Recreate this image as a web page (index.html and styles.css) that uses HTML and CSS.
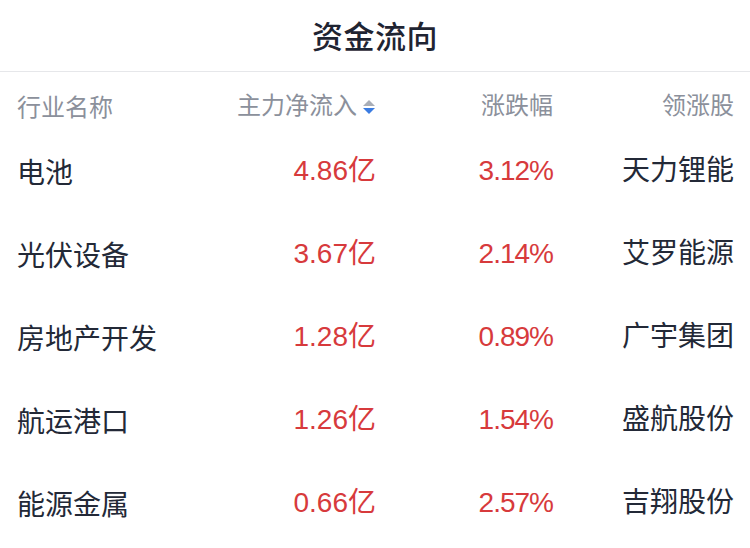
FILE: index.html
```html
<!DOCTYPE html>
<html lang="zh-CN">
<head>
<meta charset="utf-8">
<title>资金流向</title>
<link rel="stylesheet" href="styles.css">
</head>
<body>
<div class="page">
  <header class="title-bar">
    <h1 class="title">资金流向</h1>
  </header>
  <div class="table">
    <div class="row head">
      <div class="cell name">行业名称</div>
      <div class="cell num sortable">主力净流入<svg class="sort-icon" viewBox="0 0 12 14" width="12" height="14"><path d="M6 0 L12 6 L0 6 Z" fill="#a9aeb7"/><path d="M0 8 L12 8 L6 14 Z" fill="#3a7ce2"/></svg></div>
      <div class="cell num">涨跌幅</div>
      <div class="cell num">领涨股</div>
    </div>
    <div class="row">
      <div class="cell name">电池</div>
      <div class="cell num red">4.86亿</div>
      <div class="cell num red pct">3.12%</div>
      <div class="cell num">天力锂能</div>
    </div>
    <div class="row">
      <div class="cell name">光伏设备</div>
      <div class="cell num red">3.67亿</div>
      <div class="cell num red pct">2.14%</div>
      <div class="cell num">艾罗能源</div>
    </div>
    <div class="row">
      <div class="cell name">房地产开发</div>
      <div class="cell num red">1.28亿</div>
      <div class="cell num red pct">0.89%</div>
      <div class="cell num">广宇集团</div>
    </div>
    <div class="row">
      <div class="cell name">航运港口</div>
      <div class="cell num red">1.26亿</div>
      <div class="cell num red pct">1.54%</div>
      <div class="cell num">盛航股份</div>
    </div>
    <div class="row">
      <div class="cell name">能源金属</div>
      <div class="cell num red">0.66亿</div>
      <div class="cell num red pct">2.57%</div>
      <div class="cell num">吉翔股份</div>
    </div>
  </div>
</div>
</body>
</html>
```
FILE: styles.css
```css
html, body {
  margin: 0;
  padding: 0;
  background: #ffffff;
}
body {
  font-family: "Liberation Sans", "Noto Sans CJK SC", sans-serif;
  color: #232937;
}
.page {
  width: 750px;
  height: 548px;
  overflow: hidden;
}
.title-bar {
  height: 72px;
  border-bottom: 1px solid #e6e7ea;
  display: flex;
  align-items: center;
  justify-content: center;
  padding-bottom: 3px;
  box-sizing: border-box;
}
.title {
  margin: 0;
  font-family: "Noto Sans CJK SC", sans-serif;
  font-size: 31px;
  font-weight: 500;
  line-height: 1;
  color: #1f2432;
  letter-spacing: 0.5px;
}
.table {
  padding: 0 16px 0 17px;
}
.row {
  display: grid;
  grid-template-columns: 179px 180px 177px 181px;
  align-items: center;
  height: 83px;
  font-size: 28px;
}
.row.head {
  height: 57px;
  padding-top: 10px;
  box-sizing: border-box;
  font-size: 24px;
  color: #8b909b;
}
.cell {
  white-space: nowrap;
  line-height: 1;
}
.name {
  text-align: left;
  font-family: "Noto Sans CJK SC", sans-serif;
}
.num {
  text-align: right;
}
.sortable {
  display: flex;
  justify-content: flex-end;
  align-items: center;
  gap: 6px;
}
.sort-icon {
  display: block;
  margin-top: 2px;
  margin-right: 1px;
}
.red {
  color: #d73a3c;
}
.pct {
  letter-spacing: -1px;
}
```
